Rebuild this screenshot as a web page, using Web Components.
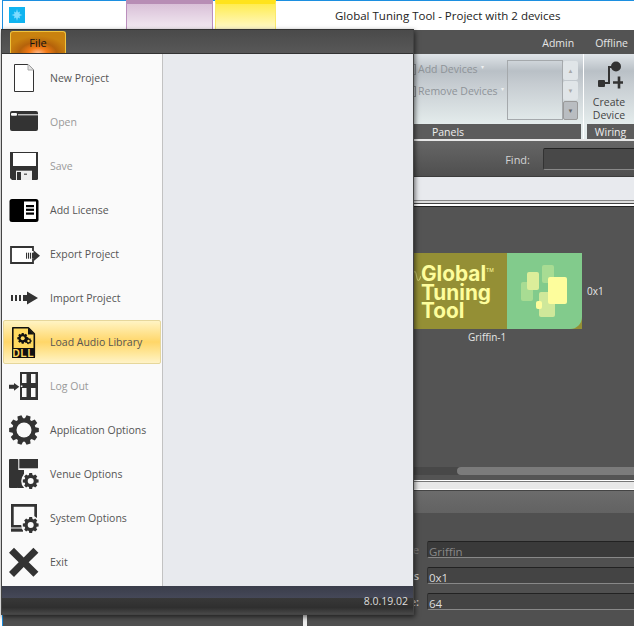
<!DOCTYPE html>
<html>
<head>
<meta charset="utf-8">
<title>Global Tuning Tool</title>
<style>
    html, body { margin: 0; padding: 0; background: #fff; }
    body { width: 634px; height: 626px; overflow: hidden; font-family: "Open Sans", "Noto Sans", sans-serif; font-size: 11px; }
</style>
</head>
<body>
<gtt-app>
    <gtt-titlebar title-text="Global Tuning Tool - Project with 2 devices"></gtt-titlebar>
    <gtt-statusbar></gtt-statusbar>
    <gtt-ribbon></gtt-ribbon>
    <gtt-findbar></gtt-findbar>
    <gtt-canvas>
        <gtt-device name="Griffin-1" address="0x1"></gtt-device>
    </gtt-canvas>
    <gtt-props>
        <gtt-field label="e" value="Griffin" disabled></gtt-field>
        <gtt-field label="s" value="0x1"></gtt-field>
        <gtt-field label="e:" value="64"></gtt-field>
    </gtt-props>
    <gtt-backstage version="8.0.19.02">
        <gtt-menu-item icon="new" label="New Project"></gtt-menu-item>
        <gtt-menu-item icon="open" label="Open" disabled></gtt-menu-item>
        <gtt-menu-item icon="save" label="Save" disabled></gtt-menu-item>
        <gtt-menu-item icon="license" label="Add License"></gtt-menu-item>
        <gtt-menu-item icon="export" label="Export Project"></gtt-menu-item>
        <gtt-menu-item icon="import" label="Import Project"></gtt-menu-item>
        <gtt-menu-item icon="dll" label="Load Audio Library" active></gtt-menu-item>
        <gtt-menu-item icon="logout" label="Log Out" disabled></gtt-menu-item>
        <gtt-menu-item icon="app" label="Application Options"></gtt-menu-item>
        <gtt-menu-item icon="venue" label="Venue Options"></gtt-menu-item>
        <gtt-menu-item icon="system" label="System Options"></gtt-menu-item>
        <gtt-menu-item icon="exit" label="Exit"></gtt-menu-item>
    </gtt-backstage>
</gtt-app>

<script>
// gear outline used by a few of the menu icons
function gear(cx, cy, r, teeth, fill, hole, holeFill = '#fafafa') {
    let d = '';
    const inn = r * 0.78;
    for (let i = 0; i < teeth; i++) {
        const a = (i / teeth) * Math.PI * 2;
        const w = Math.PI / teeth * 0.6;
        const pts = [[inn, a - w * 1.25], [r, a - w * 0.75], [r, a + w * 0.75], [inn, a + w * 1.25]];
        pts.forEach((p, j) => {
            const x = (cx + p[0] * Math.cos(p[1])).toFixed(2);
            const y = (cy + p[0] * Math.sin(p[1])).toFixed(2);
            d += (i === 0 && j === 0 ? 'M' : 'L') + x + ' ' + y + ' ';
        });
    }
    return `<path d="${d}Z" fill="${fill}"/><circle cx="${cx}" cy="${cy}" r="${hole}" fill="${holeFill}"/>`;
}

const ICONS = {
    new: `<path d="M5.500 1.500h13.500l5.500 5.500v21.500h-19z" fill="#fff" stroke="#333" stroke-width="1"/><path d="M19 1.500v5.500h5.500" fill="#e4e4e4" stroke="#aaa" stroke-width="1"/>`,
    open: `<rect x="1" y="4" width="28" height="20" rx="2" fill="#333"/><rect x="9" y="7.300" width="20" height="1" fill="#fafafa"/><rect x="2" y="6" width="6" height="2.800" rx="1" fill="#fafafa"/>`,
    save: `<path d="M1 1h28v26.500a1.500 1.500 0 0 1-1.500 1.500H3l-2-2z" fill="#333"/><rect x="4" y="2" width="23" height="13" fill="#fff"/><rect x="7" y="19.700" width="16" height="9.300" fill="#eee"/><rect x="8" y="21" width="4" height="8" fill="#333"/><rect x="15" y="22.500" width="3" height="1.500" fill="#666"/>`,
    license: `<rect x=".5" y="4" width="29" height="23" rx="2.500" fill="#000"/><rect x="15" y="6.500" width="12" height="17.500" fill="#fff"/><rect x="17" y="10" width="8" height="2.200" fill="#000"/><rect x="17" y="13.700" width="8" height="2.200" fill="#000"/><rect x="17" y="17.500" width="8" height="2.200" fill="#000"/>`,
    export: `<path d="M24 12V8H2v16h22v-4" fill="#fff" stroke="#333" stroke-width="1.800"/><rect x="17" y="13.700" width="1.100" height="6" fill="#333"/><rect x="19" y="13.700" width="1.100" height="6" fill="#333"/><rect x="21" y="13.700" width="1.100" height="6" fill="#333"/><path d="M23 13.700h1.500v-2.500l6.500 5.500-6.500 5.500v-2.500H23z" fill="#333"/>`,
    import: `<rect x="2" y="12" width="2" height="6" fill="#333"/><rect x="6" y="12" width="2" height="6" fill="#333"/><rect x="10" y="12" width="2" height="6" fill="#333"/><path d="M14 12h4V8.500L29 15l-11 6.500V18h-4z" fill="#333"/>`,
    dll: `<path d="M3.800 .8h15.500l6 6V30H3.800z" fill="#ffd95f" stroke="#111" stroke-width="1.600" stroke-linejoin="round"/><path d="M19 1v6.500h6z" fill="#111"/><rect x="3" y="21" width="23" height="10" fill="#111"/><text x="14.500" y="29.500" text-anchor="middle" font-family="Liberation Sans, sans-serif" font-size="10" font-weight="700" fill="#ffd95f" letter-spacing=".8">DLL</text>${gear(13.700, 11.300, 5.500, 8, '#111', 2, '#ffd95f')}${gear(19.500, 14, 3.200, 7, '#111', 1.200, '#ffd95f')}`,
    logout: `<rect x="11" y="1" width="18" height="28" fill="#333"/><rect x="13" y="3" width="4.500" height="9" fill="#fafafa"/><rect x="22" y="3" width="4.500" height="9" fill="#fafafa"/><rect x="13" y="17" width="4.500" height="9" fill="#fafafa"/><rect x="22" y="17" width="4.500" height="9" fill="#fafafa"/><rect x="11.800" y="14.500" width="1.600" height="1.500" fill="#fafafa"/><path d="M0 13.700h5V12l5.300 3.700L5 19.700v-2H0z" fill="#333"/>`,
    app: gear(15, 15, 15, 10, '#333', 7.500),
    venue: `<rect x="0" y="0" width="9.300" height="29" rx="1" fill="#333"/><rect x="10.300" y="0" width="18.700" height="9.300" fill="#333"/><rect x="9" y="11" width="6" height="18" fill="#333"/><circle cx="21.700" cy="22" r="9.500" fill="#fafafa"/>${gear(21.700, 22, 8, 8, '#333', 3)}`,
    system: `<path d="M2 1h26v16h-2.700V3.700H4.700V22H14v2.500H2z" fill="#333"/><rect x="2" y="25.500" width="12" height="3.200" fill="#333"/><circle cx="21.700" cy="22" r="9.500" fill="#fafafa"/>${gear(21.700, 22, 8, 8, '#333', 3)}`,
    exit: `<path d="M5 .7l9.700 9.700L24.400 .7l5 5-9.700 9.500 9.700 9.500-5 5-9.700-9.700L5 30l-5-5 9.700-9.800L0 5.700z" fill="#333"/>`
};

class GttApp extends HTMLElement {
    constructor() {
        super();
        this.attachShadow({ mode: 'open' });
        this.shadowRoot.innerHTML = `
        <style>
            :host { display: flex; flex-direction: column; position: relative; box-sizing: border-box; width: 632px; height: 626px; margin-left: 2px; border-left: 1px solid #1c8fe0; }
        </style>
        <slot></slot>`;
    }
}

class GttTitlebar extends HTMLElement {
    constructor() {
        super();
        this.attachShadow({ mode: 'open' });
        this.shadowRoot.innerHTML = `
        <style>
            :host { display: flex; height: 30px; flex: none; box-sizing: border-box; background: #fff; border-top: 1px solid #1c8fe0; color: #222; font-size: 11.500px; position: relative; }
            .logo { width: 16px; height: 16px; margin: 6px 0 0 6px; background: #10b4f0; display: flex; align-items: center; justify-content: center; }
            .tab { width: 87px; height: 30px; margin: -1px 0 0 0; box-sizing: border-box; border: 1px solid #bb8fbd; border-top: 4px solid #b78db5; border-bottom: none; background: linear-gradient(#d9c0d8, #f4ecf3); }
            .tab.first { margin-left: 101px; }
            .tab.yellow { width: 61px; margin-left: 2px; border-color: #fbe96a; border-top-color: #ffe31b; background: linear-gradient(#ffec50, #fffad0); }
            .title { position: absolute; left: 332px; top: 7px; white-space: nowrap; line-height: 16px; }
        </style>
        <div class="logo">
            <svg width="14" height="14" viewBox="0 0 14 14"><path d="M7 1l1 3.500 2-1-.5 2.500 3 1-3 1 .5 2.500-2-1-1 3.500-1-3.500-2 1 .5-2.500-3-1 3-1-.5-2.500 2 1z" fill="#7fdcff"/></svg>
        </div>
        <div class="tab first"></div>
        <div class="tab yellow"></div>
        <div class="title">${this.getAttribute('title-text')}</div>`;
    }
}

class GttStatusbar extends HTMLElement {
    constructor() {
        super();
        this.attachShadow({ mode: 'open' });
        this.shadowRoot.innerHTML = `
        <style>
            :host { display: flex; justify-content: flex-end; align-items: center; gap: 21px; flex: none; height: 24px; box-sizing: border-box; padding: 2px 6px 0 0; background: #535353; color: #e6e6e6; font-size: 10.500px; }
        </style>
        <span>Admin</span><span>Offline</span>`;
    }
}

class GttRibbon extends HTMLElement {
    constructor() {
        super();
        this.attachShadow({ mode: 'open' });
        this.shadowRoot.innerHTML = `
        <style>
            :host { display: grid; flex: none; height: 85px; grid-template-columns: 578px 6px 1fr; grid-template-rows: 70px 15px; font-size: 10.500px; background: linear-gradient(#dfe4e8 0, #b9c0c6 17px, #c6ccd1 30px, #e4ecec 70px, #e4ecec 100%); }
            .sep { grid-row: 1 / 3; grid-column: 2; width: 1px; margin-left: 2px; background: #fff; }
            .panels { grid-row: 1; grid-column: 1; display: flex; justify-content: flex-end; padding-right: 3px; }
            .wiring { grid-row: 1; grid-column: 3; }
            .cap { background: #5c5c5c; color: #eee; line-height: 16px; text-align: center; overflow: hidden; }
            .cap.p { grid-row: 2; grid-column: 1; padding-left: 312px; }
            .cap.w { grid-row: 2; grid-column: 3; }
            .devices { display: flex; flex-direction: column; gap: 7px; padding: 8px 0 0 7px; color: #8e9398; width: 110px; box-sizing: border-box; }
            .devices span { display: flex; align-items: center; gap: 2px; line-height: 15px; white-space: nowrap; }
            .devices u { flex: none; width: 10px; height: 9px; border: 1px solid #8e9398; }
            .devices i { font-style: normal; font-size: 6px; margin: -4px 0 0 1px; color: #eef0f0; }
            .gallery { width: 56px; height: 60px; margin-top: 6px; box-sizing: border-box; border: 1px solid #a5a9ac; }
            .scroll { display: flex; flex-direction: column; width: 15px; margin-top: 7px; gap: 1px; }
            .scroll b { display: flex; align-items: center; justify-content: center; height: 19px; background: #e0e5e8; border-radius: 2px; font-size: 6px; font-weight: 400; color: #a8a8a8; }
            .scroll b:last-child { background: #b9bdc1; border: 1px solid #9a9a9a; box-sizing: border-box; color: #666; }
            .create { display: flex; flex-direction: column; align-items: center; color: #444; line-height: 13px; text-align: center; padding: 7px 0 0 0; width: 44px; }
            .create svg { margin-bottom: 7px; flex: none; }
        </style>
        <div class="panels">
            <div class="devices"><span><u></u>Add Devices<i>&#9662;</i></span><span><u></u>Remove Devices<i>&#9662;</i></span></div>
            <div class="gallery"></div>
            <div class="scroll"><b>&#9650;</b><b>&#9660;</b><b>&#9660;</b></div>
        </div>
        <div class="sep"></div>
        <div class="wiring">
            <div class="create">
                <svg width="28" height="28" viewBox="0 0 28 28">
                    <rect x="3" y="19" width="7" height="7" rx="1" fill="#333"/>
                    <path d="M10 22h4V6h7" fill="none" stroke="#333" stroke-width="2"/>
                    <circle cx="21" cy="5.500" r="5" fill="#333"/>
                    <path d="M18 21.500h12M24 15.500v12" stroke="#333" stroke-width="2.600" fill="none"/>
                </svg>
                <span>Create<br>Device</span>
            </div>
        </div>
        <div class="cap p">Panels</div>
        <div class="cap w">Wiring</div>`;
    }
}

class GttFindbar extends HTMLElement {
    constructor() {
        super();
        this.attachShadow({ mode: 'open' });
        this.shadowRoot.innerHTML = `
        <style>
            :host { display: flex; flex: none; justify-content: flex-end; align-items: center; gap: 13px; height: 38px; box-sizing: border-box; background: linear-gradient(#666, #4f4f4f); border-top: 2px solid #e8e8e8; border-bottom: 1px solid #3c3c3c; color: #d4d4d4; font-size: 11px; }
            span { margin-top: 2px; }
            .input { width: 91px; height: 22px; box-sizing: border-box; background: #484848; border-top: 1px solid #222; border-left: 1px solid #333; border-bottom: 1px solid #888; border-radius: 2px 0 0 2px; }
        </style>
        <span>Find:</span><div class="input"></div>`;
    }
}

class GttCanvas extends HTMLElement {
    constructor() {
        super();
        this.attachShadow({ mode: 'open' });
        this.shadowRoot.innerHTML = `
        <style>
            :host { display: flex; flex-direction: column; flex: none; }
            .band { flex: none; height: 23px; background: #e8eaee; }
            .rule { flex: none; height: 7px; background: linear-gradient(#888 0 1px, #ddd 1px 3px, #444 3px 4px, #fff 4px 6px, #222 6px 7px); }
            .stage { flex: none; height: 260px; box-sizing: border-box; background: #545454; padding: 46px 0 0 337px; }
            .track { flex: none; height: 8px; background: #484848; position: relative; }
            .thumb { position: absolute; left: 454px; right: 0; top: 0; bottom: 0; border-radius: 4px 0 0 4px; background: #7b7b7b; }
            .foot { flex: none; height: 5px; background: #545454; }
        </style>
        <div class="band"></div>
        <div class="rule"></div>
        <div class="stage"><slot></slot></div>
        <div class="track"><div class="thumb"></div></div>
        <div class="foot"></div>`;
    }
}

class GttDevice extends HTMLElement {
    constructor() {
        super();
        this.attachShadow({ mode: 'open' });
        const rects = [
            [14, 29, 12, 19, '#a8dc93'], [35, 12, 12, 18, '#a8dc93'], [20, 19, 12, 18, '#dcee9a'],
            [32, 39, 16, 25, '#cfe89a'], [41, 24, 19, 27, '#fdfd9c'], [29, 48, 6, 8, '#fdfd9c']
        ].map(r => `<i style="left:${r[0]}px;top:${r[1]}px;width:${r[2]}px;height:${r[3]}px;background:${r[4]}"></i>`).join('');
        this.shadowRoot.innerHTML = `
        <style>
            :host { display: grid; grid-template-columns: 242px auto; column-gap: 5px; align-items: center; color: #e6e6e6; font-size: 10px; }
            .tile { display: flex; height: 76px; background: #948f35; }
            .brand { width: 167px; flex: none; box-sizing: border-box; padding: 12px 0 0 81px; color: #fdfd9c; font: 700 20.800px/18.500px Inter, Lato, sans-serif; white-space: nowrap; }
            .brand svg { width: 8px; height: 12px; margin: 0 0 0 -8px; vertical-align: -1px; }
            .brand sup { font-size: 5px; font-weight: 400; vertical-align: 9px; line-height: 0; }
            .art { position: relative; flex: 1; background: #82cb8c; border-radius: 0 0 12px 0; }
            .art i { position: absolute; border-radius: 2px; }
            .name { grid-column: 1; padding-left: 128px; line-height: 14px; margin-top: 1px; }
        </style>
        <div class="tile">
            <div class="brand"><svg viewBox="0 0 8 12"><path d="M0 6c1-6 2.500-6 3.500 0s2.500 6 4.500 0" fill="none" stroke="#c8c96e" stroke-width="1.200"/></svg>Global<sup>TM</sup><br>Tuning<br>Tool</div>
            <div class="art">${rects}</div>
        </div>
        <div>${this.getAttribute('address')}</div>
        <div class="name">${this.getAttribute('name')}</div>`;
    }
}

class GttProps extends HTMLElement {
    constructor() {
        super();
        this.attachShadow({ mode: 'open' });
        this.shadowRoot.innerHTML = `
        <style>
            :host { display: flex; flex-direction: column; flex: 1; min-height: 0; }
            .rule { flex: none; height: 11px; background: linear-gradient(#fff 0 1px, #777 1px 2px, #e8e8e8 2px 9px, #fff 9px 10px, #444 10px 11px); }
            .head { flex: none; height: 22px; background: linear-gradient(#6c6c6c, #626262); }
            .body { flex: 1; display: flex; background: #505050; }
            .left { flex: none; width: 300px; }
            .split { flex: none; width: 4px; margin-top: 102px; background: #eee; }
            .rows { flex: 1; display: flex; flex-direction: column; gap: 9px; padding-top: 28px; }
        </style>
        <div class="rule"></div>
        <div class="head"></div>
        <div class="body">
            <div class="left"></div>
            <div class="split"></div>
            <div class="rows"><slot></slot></div>
        </div>`;
    }
}

class GttField extends HTMLElement {
    constructor() {
        super();
        this.attachShadow({ mode: 'open' });
        const off = this.hasAttribute('disabled');
        this.shadowRoot.innerHTML = `
        <style>
            :host { display: flex; align-items: center; height: 17px; font-size: 11.500px; color: #ddd; gap: 8px; }
            label { width: 112px; text-align: right; font-weight: 600; font-size: 11px; color: ${off ? '#777' : '#ccc'}; line-height: 19px; }
            .box { flex: 1; height: 17px; box-sizing: border-box; background: ${off ? '#3a3a3a' : '#444'}; border-top: 1px solid #222; border-left: 1px solid #333; border-bottom: 1px solid #888; border-radius: 2px 0 0 2px; padding-left: 1px; line-height: 19px; color: ${off ? '#888' : '#ddd'}; }
        </style>
        <label>${this.getAttribute('label')}</label>
        <div class="box">${this.getAttribute('value')}</div>`;
    }
}

// the File menu lies over the whole window
class GttBackstage extends HTMLElement {
    constructor() {
        super();
        this.attachShadow({ mode: 'open' });
        this.shadowRoot.innerHTML = `
        <style>
            :host { position: absolute; left: -2px; top: 29px; width: 413px; height: 586px; display: flex; flex-direction: column; box-shadow: 1px 2px 5px rgba(0,0,0,.6); border: 1px solid #444; border-top-color: #333; box-sizing: border-box; background: #e8eaee; }
            .head { flex: none; height: 24px; background: linear-gradient(#4a4a4a, #585858); padding-left: 8px; display: flex; align-items: flex-end; border-bottom: 1px solid #333; box-sizing: border-box; }
            .file { width: 56px; height: 22px; box-sizing: border-box; border: 1px solid #f0c23c; border-bottom: none; border-radius: 3px 3px 0 0; background: radial-gradient(ellipse 30px 17px at 50% 100%, #ffb888 0, #f37a16 30%, #b5620b 62%, #c9820f 100%); color: #111; text-align: center; font-size: 11px; line-height: 22px; }
            .main { flex: 1; display: flex; min-height: 0; }
            .menu { width: 161px; flex: none; box-sizing: border-box; padding: 2px 1px 0 1px; background: #fafafa; border-right: 1px solid #c2c2c2; display: flex; flex-direction: column; }
            .pane { flex: 1; background: #e8eaee; }
            .foot { flex: none; height: 28px; display: flex; flex-direction: column; }
            .strip { flex: none; height: 12px; background: linear-gradient(#3a3d4a, #454858); }
            .ver { flex: 1; background: linear-gradient(#383838, #2f2f2f 60%, #484848); color: #ddd; text-align: right; padding-right: 5px; font-size: 10.500px; line-height: 7px; }
        </style>
        <div class="head"><div class="file">File</div></div>
        <div class="main">
            <div class="menu"><slot></slot></div>
            <div class="pane"></div>
        </div>
        <div class="foot"><div class="strip"></div><div class="ver">${this.getAttribute('version')}</div></div>`;
    }
}

class GttMenuItem extends HTMLElement {
    constructor() {
        super();
        this.attachShadow({ mode: 'open' });
        this.shadowRoot.innerHTML = `
        <style>
            :host { display: flex; flex: none; align-items: center; height: 44px; box-sizing: border-box; gap: 11px; padding-left: 6px; color: #555; font-size: 10.500px; white-space: nowrap; }
            :host([disabled]) { color: #999; }
            :host([active]) { border: 1px solid #e6d79b; border-radius: 2px; padding-left: 5px; background: linear-gradient(#fff4c4, #ffd668 50%, #ffe9a0 80%, #fff3c8); }
            svg { flex: none; overflow: visible; }
        </style>
        <svg width="30" height="30" viewBox="0 0 30 30">${ICONS[this.getAttribute('icon')]}</svg>
        <span>${this.getAttribute('label')}</span>`;
    }
}

customElements.define('gtt-app', GttApp);
customElements.define('gtt-titlebar', GttTitlebar);
customElements.define('gtt-statusbar', GttStatusbar);
customElements.define('gtt-ribbon', GttRibbon);
customElements.define('gtt-findbar', GttFindbar);
customElements.define('gtt-canvas', GttCanvas);
customElements.define('gtt-device', GttDevice);
customElements.define('gtt-props', GttProps);
customElements.define('gtt-field', GttField);
customElements.define('gtt-backstage', GttBackstage);
customElements.define('gtt-menu-item', GttMenuItem);
</script>
</body>
</html>
